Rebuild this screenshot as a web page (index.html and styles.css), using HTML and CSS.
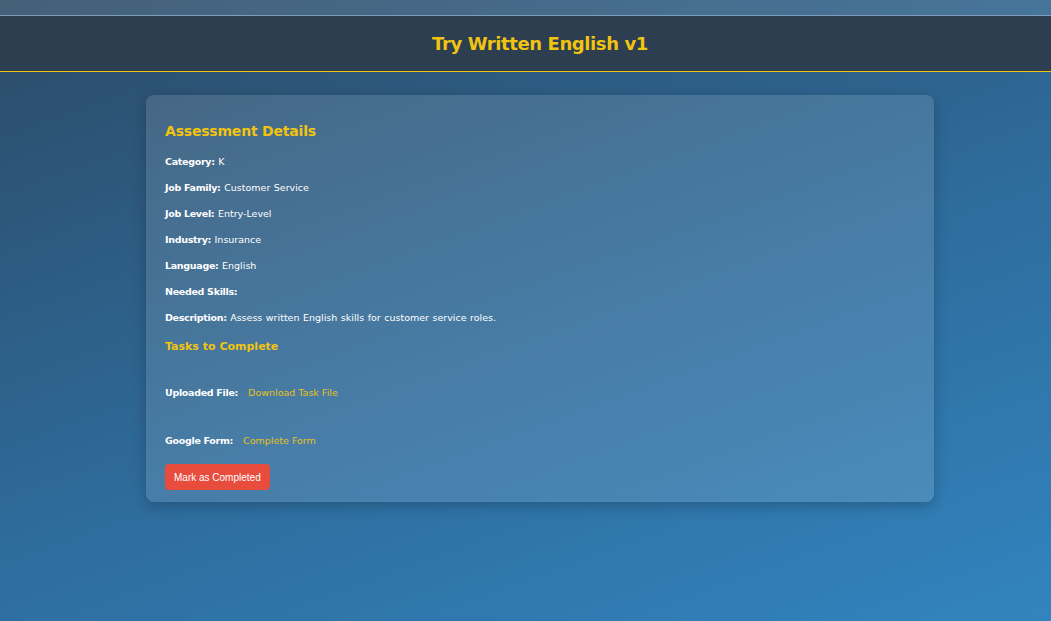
FILE: index.html
```html
<!DOCTYPE html>
<html>
<head>
<meta charset="utf-8">
<link rel="stylesheet" href="styles.css">
</head>
<body>
<div class="page">
  <div class="topstrip"></div>
  <header class="header"><h1>Try Written English v1</h1></header>
  <main class="card">
    <h2>Assessment Details</h2>
    <p><b>Category:</b> K</p>
    <p><b>Job Family:</b> Customer Service</p>
    <p><b>Job Level:</b> Entry-Level</p>
    <p><b>Industry:</b> Insurance</p>
    <p><b>Language:</b> English</p>
    <p><b>Needed Skills:</b></p>
    <p><b>Description:</b> Assess written English skills for customer service roles.</p>
    <h3>Tasks to Complete</h3>
    <div class="task"><b>Uploaded File:</b><a href="#">Download Task File</a></div>
    <div class="task"><b>Google Form:</b><a href="#">Complete Form</a></div>
    <button class="btn">Mark as Completed</button>
  </main>
</div>
</body>
</html>
```
FILE: styles.css
```css
html, body { margin: 0; padding: 0; overflow: hidden; }
body {
  width: 1051px; height: 621px;
  background: linear-gradient(160deg, #2c4a66 0%, #2e6c9c 55%, #3284bf 100%);
  font-family: "DejaVu Sans", "Open Sans", sans-serif;
  color: #fff;
}
.page { width: 1080px; }
.topstrip {
  height: 15px;
  background: rgba(255,255,255,0.12);
  border-bottom: 1px solid #7d9cb9;
}
.header {
  background: #2c3e50;
  height: 55px;
  border-bottom: 1px solid #f1c40f;
  display: flex; align-items: center; justify-content: center;
}
.header h1 {
  margin: 0; color: #f1c40f;
  font-size: 18px; font-weight: bold; letter-spacing: -0.4px;
}
.card {
  width: 788px; box-sizing: border-box;
  margin: 23px auto 0;
  padding: 26px 19px 12px;
  background: rgba(255,255,255,0.12);
  border-radius: 8px;
  box-shadow: 0 4px 14px rgba(0,0,0,0.22);
}
.card h2 { margin: 0 0 13px; color: #f1c40f; font-size: 14px; line-height: 20px; letter-spacing: -0.2px; }
.card p { margin: 0 0 10px; font-size: 9.5px; line-height: 16px; word-spacing: 0.5px; }
.card b { letter-spacing: -0.3px; word-spacing: 0; }
.card h3 { margin: 13px 0 0; color: #f1c40f; font-size: 11px; line-height: 16px; }
.task { display: flex; gap: 10px; font-size: 9.5px; line-height: 16px; margin-top: 30px; }
.task + .task { margin-top: 32px; }
.task a { color: #e8c11a; text-decoration: none; font-weight: normal; }
.btn {
  margin-top: 15px;
  background: #e74c3c; color: #fff; border: none;
  border-radius: 4px; padding: 0 9px; height: 26px;
  font-family: "Liberation Sans", Arial, sans-serif; font-size: 10px;
}
```
